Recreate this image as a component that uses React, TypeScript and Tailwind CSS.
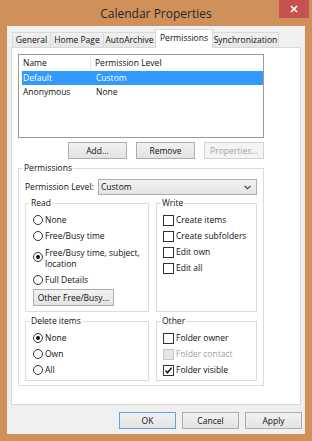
import React from "react";

function Radio({ checked }: { checked?: boolean }) {
  return (
    <span className="w-[10px] h-[10px] rounded-full border border-[#333] bg-white flex items-center justify-center shrink-0">
      {checked && <span className="w-[4px] h-[4px] rounded-full bg-[#111]" />}
    </span>
  );
}

function Check({ checked, disabled }: { checked?: boolean; disabled?: boolean }) {
  return (
    <span
      className={
        disabled
          ? "w-[11px] h-[11px] border border-[#c6c6c6] bg-[#e6e6e6] flex items-center justify-center shrink-0"
          : "w-[11px] h-[11px] border border-[#333] bg-white flex items-center justify-center shrink-0"
      }
    >
      {checked && (
        <svg width="9" height="9" viewBox="0 0 9 9">
          <path d="M1.5 4.5 L3.5 6.8 L7.6 1.6" stroke="#111" strokeWidth="1.5" fill="none" />
        </svg>
      )}
    </span>
  );
}

function RadioRow({ label, checked }: { label: string; checked?: boolean }) {
  return (
    <div className="flex items-center h-[12px] gap-[2px]">
      <Radio checked={checked} />
      <span>{label}</span>
    </div>
  );
}

function CheckRow({ label, checked, disabled }: { label: string; checked?: boolean; disabled?: boolean }) {
  return (
    <div className="flex items-center h-[12px] gap-[2px]">
      <Check checked={checked} disabled={disabled} />
      <span className={disabled ? "text-[#a0a0a0]" : ""}>{label}</span>
    </div>
  );
}

function Btn({ children, w, disabled, def }: { children: React.ReactNode; w: string; disabled?: boolean; def?: boolean }) {
  const base = "h-[17px] flex items-center justify-center bg-gradient-to-b from-[#f2f2f2] to-[#e3e3e3] border ";
  const cls = disabled
    ? "border-[#d2d2d2] text-[#a3a3a3] from-[#f4f4f4] to-[#f4f4f4]"
    : def
    ? "border-[#5da3e8]"
    : "border-[#adadad]";
  return <div className={base + cls + " " + w}>{children}</div>;
}

function Tab({ label, w, selected, first }: { label: string; w: string; selected?: boolean; first?: boolean }) {
  if (selected) {
    return (
      <div className={"relative z-10 -ml-px -mb-px h-[19px] bg-white border border-b-0 border-[#d9d9d9] flex items-start justify-center pt-[2px] " + w}>
        {label}
      </div>
    );
  }
  return (
    <div
      className={
        (first ? "" : "-ml-px ") +
        "h-[15px] bg-gradient-to-b from-[#f0f0f0] to-[#e6e6e6] border border-b-0 border-[#d9d9d9] flex items-center justify-center " +
        w
      }
    >
      {label}
    </div>
  );
}

export default function App() {
  return (
    <div className="w-[312px] h-[441px] bg-[#d0905a] flex flex-col font-['Open_Sans','Noto_Sans',sans-serif] text-[8.5px] leading-[12px] text-[#111] overflow-hidden">
      {/* title bar */}
      <div className="h-[26px] shrink-0 grid grid-cols-[1fr_auto_1fr] items-start">
        <div />
        <div className="h-[26px] flex items-center text-[12px] text-[#262626] leading-[16px] pt-px">Calendar Properties</div>
        <div className="flex justify-end pr-[3px]">
          <div className="w-[30px] h-[18px] bg-[#c75050] flex items-center justify-center">
            <svg width="8" height="8" viewBox="0 0 8 8">
              <path d="M1 1 L7 7 M7 1 L1 7" stroke="white" strokeWidth="1.6" />
            </svg>
          </div>
        </div>
      </div>

      {/* body */}
      <div className="mx-[7px] h-[408px] bg-[#f0f0f0] flex flex-col">
        {/* tabs */}
        <div className="h-[21px] flex items-end pl-[5px] shrink-0">
          <Tab label="General" w="w-[39px]" first />
          <Tab label="Home Page" w="w-[54px]" />
          <Tab label="AutoArchive" w="w-[53px]" />
          <Tab label="Permissions" w="w-[58px]" selected />
          <Tab label="Synchronization" w="w-[67px]" />
        </div>

        {/* panel */}
        <div className="ml-[4px] w-[290px] h-[358px] bg-white border border-[#d9d9d9] pt-[6px] pl-[6px] shrink-0">
          <div className="w-[246px] flex flex-col">
            {/* list */}
            <div className="h-[84px] border border-[#9a9a9a] bg-white flex flex-col">
              <div className="h-[16px] flex items-center">
                <div className="w-[72px] h-full border-r border-[#e5e5e5] pl-[4px] flex items-center">Name</div>
                <div className="pl-[4px]">Permission Level</div>
              </div>
              <div className="h-[14px] ml-[3px] bg-[#3399ff] text-white flex items-center">
                <div className="w-[74px] pl-[1px]">Default</div>
                <div>Custom</div>
              </div>
              <div className="h-[14px] ml-[3px] flex items-center">
                <div className="w-[74px] pl-[1px]">Anonymous</div>
                <div>None</div>
              </div>
            </div>

            {/* list buttons */}
            <div className="mt-[4px] flex justify-end gap-[9px]">
              <Btn w="w-[59px]">Add...</Btn>
              <Btn w="w-[59px]">Remove</Btn>
              <Btn w="w-[60px]" disabled>Properties...</Btn>
            </div>

            {/* permissions group */}
            <fieldset className="mt-[3px] border border-[#dcdcdc] px-0 pb-[4px]">
              <legend className="ml-[4px] px-[1px] leading-[12px]">Permissions</legend>
              <div className="px-[6px] pt-[5px] flex flex-col gap-[2px]">
                <div className="flex items-center h-[16px]">
                  <span>Permission Level:</span>
                  <div className="ml-auto w-[159px] h-[16px] border border-[#adadad] bg-gradient-to-b from-[#f2f2f2] to-[#e4e4e4] flex items-center pl-[2px] pr-[5px]">
                    <span>Custom</span>
                    <svg className="ml-auto" width="7" height="5" viewBox="0 0 7 5">
                      <path d="M0.5 0.8 L3.5 3.8 L6.5 0.8" stroke="#333" strokeWidth="1.1" fill="none" />
                    </svg>
                  </div>
                </div>

                <div className="flex gap-[7px]">
                  <fieldset className="w-[124px] border border-[#dcdcdc] px-0 pb-[5px]">
                    <legend className="ml-[4px] px-[1px]">Read</legend>
                    <div className="pl-[7px] pt-[5px] flex flex-col">
                      <RadioRow label="None" />
                      <div className="mt-[4px]"><RadioRow label="Free/Busy time" /></div>
                      <div className="mt-[5px] flex items-start gap-[2px]">
                        <span className="pt-[5px]"><Radio checked /></span>
                        <span className="leading-[11px]">
                          Free/Busy time, subject,
                          <br />
                          location
                        </span>
                      </div>
                      <div className="mt-[5px]"><RadioRow label="Full Details" /></div>
                      <div className="mt-[3px]">
                        <Btn w="w-[81px]">Other Free/Busy...</Btn>
                      </div>
                    </div>
                  </fieldset>
                  <fieldset className="w-[101px] border border-[#dcdcdc] px-0">
                    <legend className="ml-[4px] px-[1px]">Write</legend>
                    <div className="pl-[6px] pt-[5px] flex flex-col gap-[4px]">
                      <CheckRow label="Create items" />
                      <CheckRow label="Create subfolders" />
                      <CheckRow label="Edit own" />
                      <CheckRow label="Edit all" />
                    </div>
                  </fieldset>
                </div>

                <div className="flex gap-[7px] mt-[1px]">
                  <fieldset className="w-[124px] border border-[#dcdcdc] px-0 pb-[4px]">
                    <legend className="ml-[4px] px-[1px]">Delete items</legend>
                    <div className="pl-[7px] pt-[5px] flex flex-col gap-[4px]">
                      <RadioRow label="None" checked />
                      <RadioRow label="Own" />
                      <RadioRow label="All" />
                    </div>
                  </fieldset>
                  <fieldset className="w-[101px] border border-[#dcdcdc] px-0 pb-[4px]">
                    <legend className="ml-[4px] px-[1px]">Other</legend>
                    <div className="pl-[6px] pt-[5px] flex flex-col gap-[4px]">
                      <CheckRow label="Folder owner" />
                      <CheckRow label="Folder contact" disabled />
                      <CheckRow label="Folder visible" checked />
                    </div>
                  </fieldset>
                </div>
              </div>
            </fieldset>
          </div>
        </div>

        {/* dialog buttons */}
        <div className="mt-[7px] flex justify-end gap-[6px] pr-[3px]">
          <Btn w="w-[57px]" def>OK</Btn>
          <Btn w="w-[57px]">Cancel</Btn>
          <Btn w="w-[57px]">Apply</Btn>
        </div>
      </div>
    </div>
  );
}
